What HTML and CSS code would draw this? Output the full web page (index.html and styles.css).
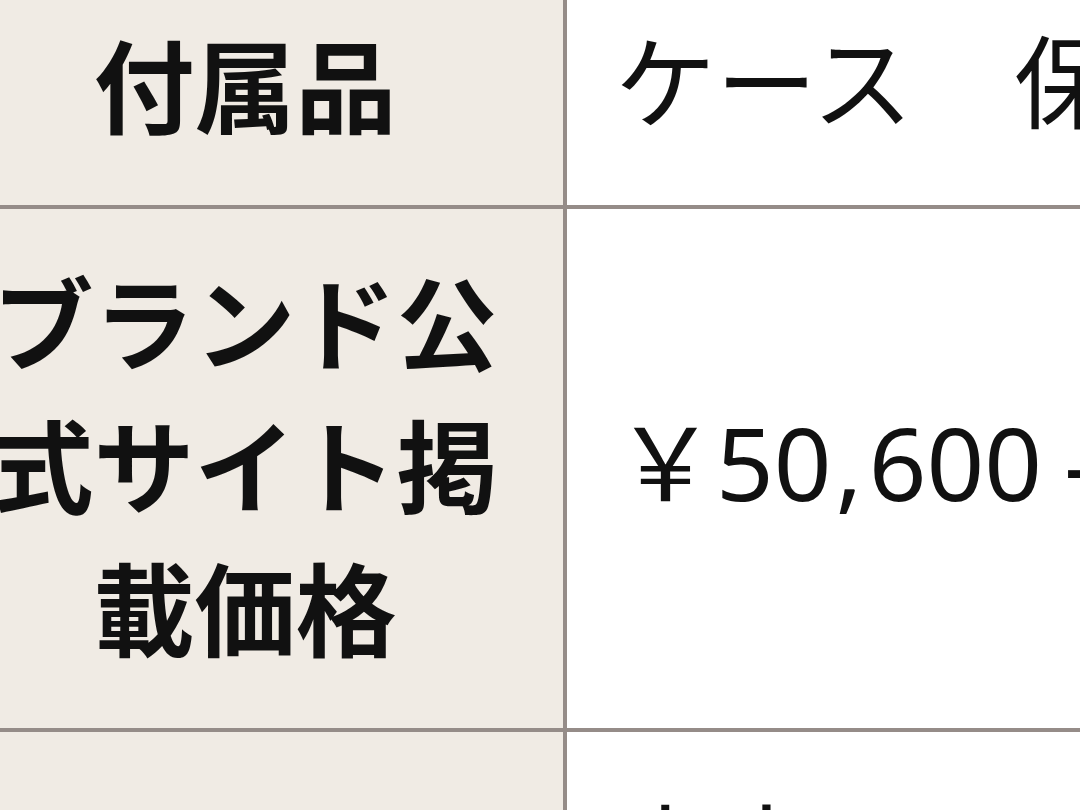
FILE: index.html
```html
<!DOCTYPE html>
<html lang="ja">
<head>
<meta charset="utf-8">
<link rel="stylesheet" href="styles.css">
</head>
<body>
<div class="spec">
  <div class="cell head r1">付属品</div>
  <div class="cell val r1">ケース　保証書</div>
  <div class="cell head r2">ブランド公式サイト掲載価格</div>
  <div class="cell val r2">￥50<span class="comma">,</span>600<span class="dash">-</span></div>
  <div class="cell head r3">中古価格</div>
  <div class="cell val r3">中古　～￥35,000-</div>
</div>
</body>
</html>
```
FILE: styles.css
```css
html, body {
  margin: 0;
  padding: 0;
  background: #ffffff;
  overflow: hidden;
  width: 1080px;
  height: 810px;
}
.spec {
  display: grid;
  grid-template-columns: 640px 720px;
  margin: -25px 0 0 -73px;
  font-family: "Noto Sans CJK JP", "Noto Sans", sans-serif;
  font-size: 101px;
  line-height: 143px;
  color: #111111;
}
.cell {
  box-sizing: border-box;
  border-bottom: 4px solid #958c88;
  display: flex;
  align-items: center;
  white-space: normal;
}
.head {
  background: #f0ebe4;
  border-right: 4px solid #958c88;
  font-weight: 700;
  justify-content: center;
  text-align: center;
  padding: 0 40px;
}
.val {
  background: #ffffff;
  padding-left: 48px;
  white-space: nowrap;
  font-weight: 400;
  font-family: "Noto Sans", "Noto Sans CJK JP", sans-serif;
}
.comma { margin: 0 6px 0 4px; }
.dash { margin-left: 22px; }
.r1 { height: 234px; line-height: 140px; padding-bottom: 16px; }
.r2 { height: 523px; padding-bottom: 12px; }
.r3 { height: 300px; align-items: flex-start; padding-top: 48px; }
.head.r3 { align-items: center; padding-top: 0; }
```
